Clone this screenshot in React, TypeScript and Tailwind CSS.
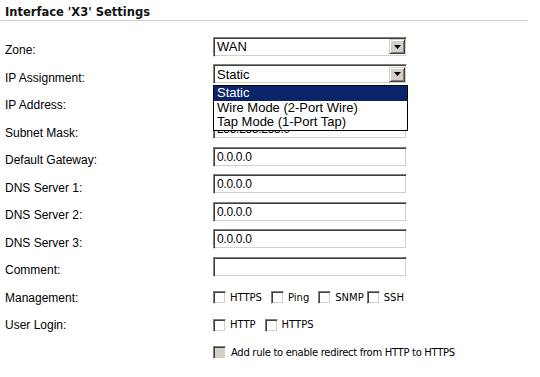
import React from 'react';

const sunken =
  'border border-t-[#808080] border-l-[#808080] border-b-white border-r-white shadow-[inset_1px_1px_0_#404040,inset_-1px_-1px_0_#d4d0c8]';

function Label({ children }: { children: React.ReactNode }) {
  return (
    <div className="w-[208px] shrink-0 pt-[7px] text-[12px] leading-[14px] text-black [font-family:'Liberation_Sans',Arial,sans-serif]">
      {children}
    </div>
  );
}

function TextBox({ value }: { value: string }) {
  return (
    <input
      readOnly
      value={value}
      className={`h-[20px] w-[194px] bg-white pl-[3px] text-[12px] tracking-[-0.3px] text-black outline-none [font-family:'Liberation_Sans',Arial,sans-serif] ${sunken}`}
    />
  );
}

function Select({ value, open }: { value: string; open?: boolean }) {
  const options = ['Static', 'Wire Mode (2-Port Wire)', 'Tap Mode (1-Port Tap)'];
  return (
    <div className="relative">
      <div
        className={`flex h-[20px] w-[194px] items-center justify-between bg-white pl-[3px] pr-[1px] text-[13px] text-black [font-family:'Liberation_Sans',Arial,sans-serif] ${sunken}`}
      >
        <span className="leading-[15px]">{value}</span>
        <span className="flex h-[15px] w-[16px] items-center justify-center border border-t-[#d4d0c8] border-l-[#d4d0c8] border-b-[#404040] border-r-[#404040] bg-[#d4d0c8] shadow-[inset_1px_1px_0_#ffffff,inset_-1px_-1px_0_#808080]">
          <svg width="7" height="4" viewBox="0 0 7 4">
            <path d="M0 0h7L3.5 4z" fill="#000" />
          </svg>
        </span>
      </div>
      {open && (
        <div className="absolute left-0 top-[21px] z-10 w-[195px] border border-black bg-white text-[13px] text-black [font-family:'Liberation_Sans',Arial,sans-serif]">
          {options.map((item, i) => (
            <div
              key={item}
              className={`h-[14.5px] pl-[3px] leading-[14.5px] ${i === 0 ? 'bg-[#0a246a] text-white' : ''}`}
            >
              {item}
            </div>
          ))}
        </div>
      )}
    </div>
  );
}

function Check({ label, disabled, className = '' }: { label: string; disabled?: boolean; className?: string }) {
  return (
    <span className={`inline-flex items-center ${className}`}>
      <span className={`h-[13px] w-[13px] shrink-0 ${disabled ? 'bg-[#d4d0c8]' : 'bg-white'} ${sunken}`} />
      <span className="ml-[4px] text-[10px] leading-[12px] text-black [font-family:'DejaVu_Sans',Verdana,sans-serif]">
        {label}
      </span>
    </span>
  );
}

function Row({ label, children }: { label?: string; children: React.ReactNode }) {
  return (
    <div className="flex h-[27.5px] items-center">
      <Label>{label}</Label>
      {children}
    </div>
  );
}

export default function App() {
  return (
    <div className="min-h-screen w-[540px] bg-white">
      <div className="w-[528px] border-b border-[#cfcfcf] pl-[5px] pt-[5px] pb-[1px]">
        <h1 className="text-[11.5px] font-bold leading-[14px] text-[#111] [font-family:'DejaVu_Sans',Verdana,sans-serif]">
          Interface 'X3' Settings
        </h1>
      </div>

      <div className="mt-[11.75px] pl-[5px]">
        <Row label="Zone:">
          <Select value="WAN" />
        </Row>
        <Row label="IP Assignment:">
          <Select value="Static" open />
        </Row>
        <Row label="IP Address:">
          <TextBox value="" />
        </Row>
        <Row label="Subnet Mask:">
          <TextBox value="255.255.255.0" />
        </Row>
        <Row label="Default Gateway:">
          <TextBox value="0.0.0.0" />
        </Row>
        <Row label="DNS Server 1:">
          <TextBox value="0.0.0.0" />
        </Row>
        <Row label="DNS Server 2:">
          <TextBox value="0.0.0.0" />
        </Row>
        <Row label="DNS Server 3:">
          <TextBox value="0.0.0.0" />
        </Row>
        <Row label="Comment:">
          <TextBox value="" />
        </Row>
        <Row label="Management:">
          <div className="flex pt-[7px]">
            <Check label="HTTPS" />
            <Check label="Ping" className="ml-[9px]" />
            <Check label="SNMP" className="ml-[9px]" />
            <Check label="SSH" className="ml-[3px]" />
          </div>
        </Row>
        <Row label="User Login:">
          <div className="flex pt-[7px]">
            <Check label="HTTP" />
            <Check label="HTTPS" className="ml-[9px]" />
          </div>
        </Row>
        <Row>
          <div className="flex pt-[7px]">
            <span className="inline-flex items-center">
              <span className={`h-[13px] w-[13px] shrink-0 bg-[#d4d0c8] ${sunken}`} />
              <span className="ml-[5px] text-[10px] leading-[12px] tracking-[-0.3px] text-black [font-family:'DejaVu_Sans',Verdana,sans-serif]">
                Add rule to enable redirect from HTTP to HTTPS
              </span>
            </span>
          </div>
        </Row>
      </div>
    </div>
  );
}
